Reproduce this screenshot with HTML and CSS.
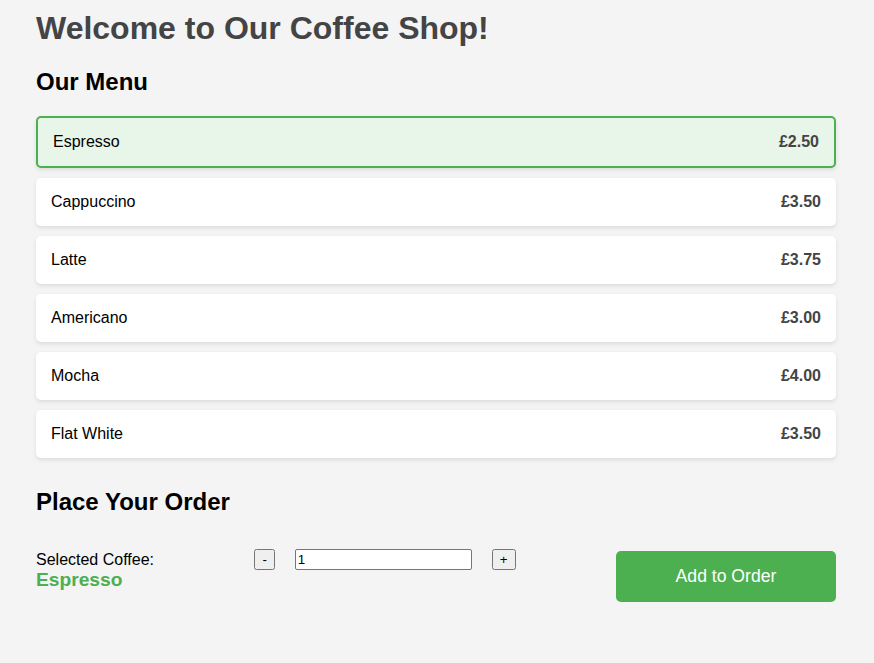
FILE: index.html
```html
<!DOCTYPE html>
<html lang="en">
<head>
<meta charset="utf-8">
<title>Coffee Shop</title>
<link rel="stylesheet" href="styles.css">
</head>
<body>
<div class="container">
  <h1 class="title">Welcome to Our Coffee Shop!</h1>
  <h2 class="section-title">Our Menu</h2>
  <ul class="menu">
    <li class="menu-item selected"><span class="name">Espresso</span><span class="price">£2.50</span></li>
    <li class="menu-item"><span class="name">Cappuccino</span><span class="price">£3.50</span></li>
    <li class="menu-item"><span class="name">Latte</span><span class="price">£3.75</span></li>
    <li class="menu-item"><span class="name">Americano</span><span class="price">£3.00</span></li>
    <li class="menu-item"><span class="name">Mocha</span><span class="price">£4.00</span></li>
    <li class="menu-item"><span class="name">Flat White</span><span class="price">£3.50</span></li>
  </ul>
  <h2 class="section-title">Place Your Order</h2>
  <div class="order">
    <div class="selected-info">
      <div class="label">Selected Coffee:</div>
      <div class="coffee">Espresso</div>
    </div>
    <div class="qty">
      <button class="qty-btn">-</button>
      <input class="qty-input" type="text" value="1">
      <button class="qty-btn">+</button>
    </div>
    <button class="add-btn">Add to Order</button>
  </div>
</div>
</body>
</html>
```
FILE: styles.css
```css
html, body {
  margin: 0;
  padding: 0;
}
body {
  background: #f4f4f4;
  font-family: "Liberation Sans", Arial, sans-serif;
  color: #000;
}
.container {
  width: 800px;
  padding: 10px 0 0 36px;
}
.title {
  font-size: 32px;
  color: #444;
  margin: 0 0 21px;
}
.section-title {
  font-size: 24px;
  margin: 20px 0;
}
.menu {
  list-style: none;
  margin: 0;
  padding: 0 0 10px;
  display: flex;
  flex-direction: column;
  gap: 10px;
}
.menu-item {
  display: flex;
  justify-content: space-between;
  align-items: center;
  background: #fff;
  padding: 15px;
  border-radius: 5px;
  box-shadow: 0 2px 4px rgba(0, 0, 0, 0.1);
  font-size: 16px;
  line-height: 18px;
}
.menu-item.selected {
  background: #e8f5e9;
  border: 2px solid #4caf50;
}
.price {
  font-weight: bold;
  color: #444;
}
.order {
  display: flex;
  justify-content: space-between;
  align-items: flex-start;
  padding-top: 15px;
}
.label {
  font-size: 16px;
}
.coffee {
  font-size: 19.2px;
  font-weight: bold;
  color: #4caf50;
}
.qty {
  display: flex;
  align-items: center;
  margin-top: -2px;
}
.qty-btn {
  font-family: "Liberation Sans", Arial, sans-serif;
  font-size: 13.33px;
  margin: 0 10px;
  height: 21px;
  padding: 1px 6px;
}
.qty-input {
  box-sizing: border-box;
  width: 177px;
  height: 21px;
  font-family: "Liberation Sans", Arial, sans-serif;
  font-size: 13.33px;
  padding: 1px 2px;
  border: 1px solid #767676;
  border-radius: 2px;
  margin: 0 10px;
}
.add-btn {
  width: 220px;
  height: 51px;
  background: #4caf50;
  color: #fff;
  border: none;
  border-radius: 5px;
  font-family: "Liberation Sans", Arial, sans-serif;
  font-size: 17.6px;
}
```
